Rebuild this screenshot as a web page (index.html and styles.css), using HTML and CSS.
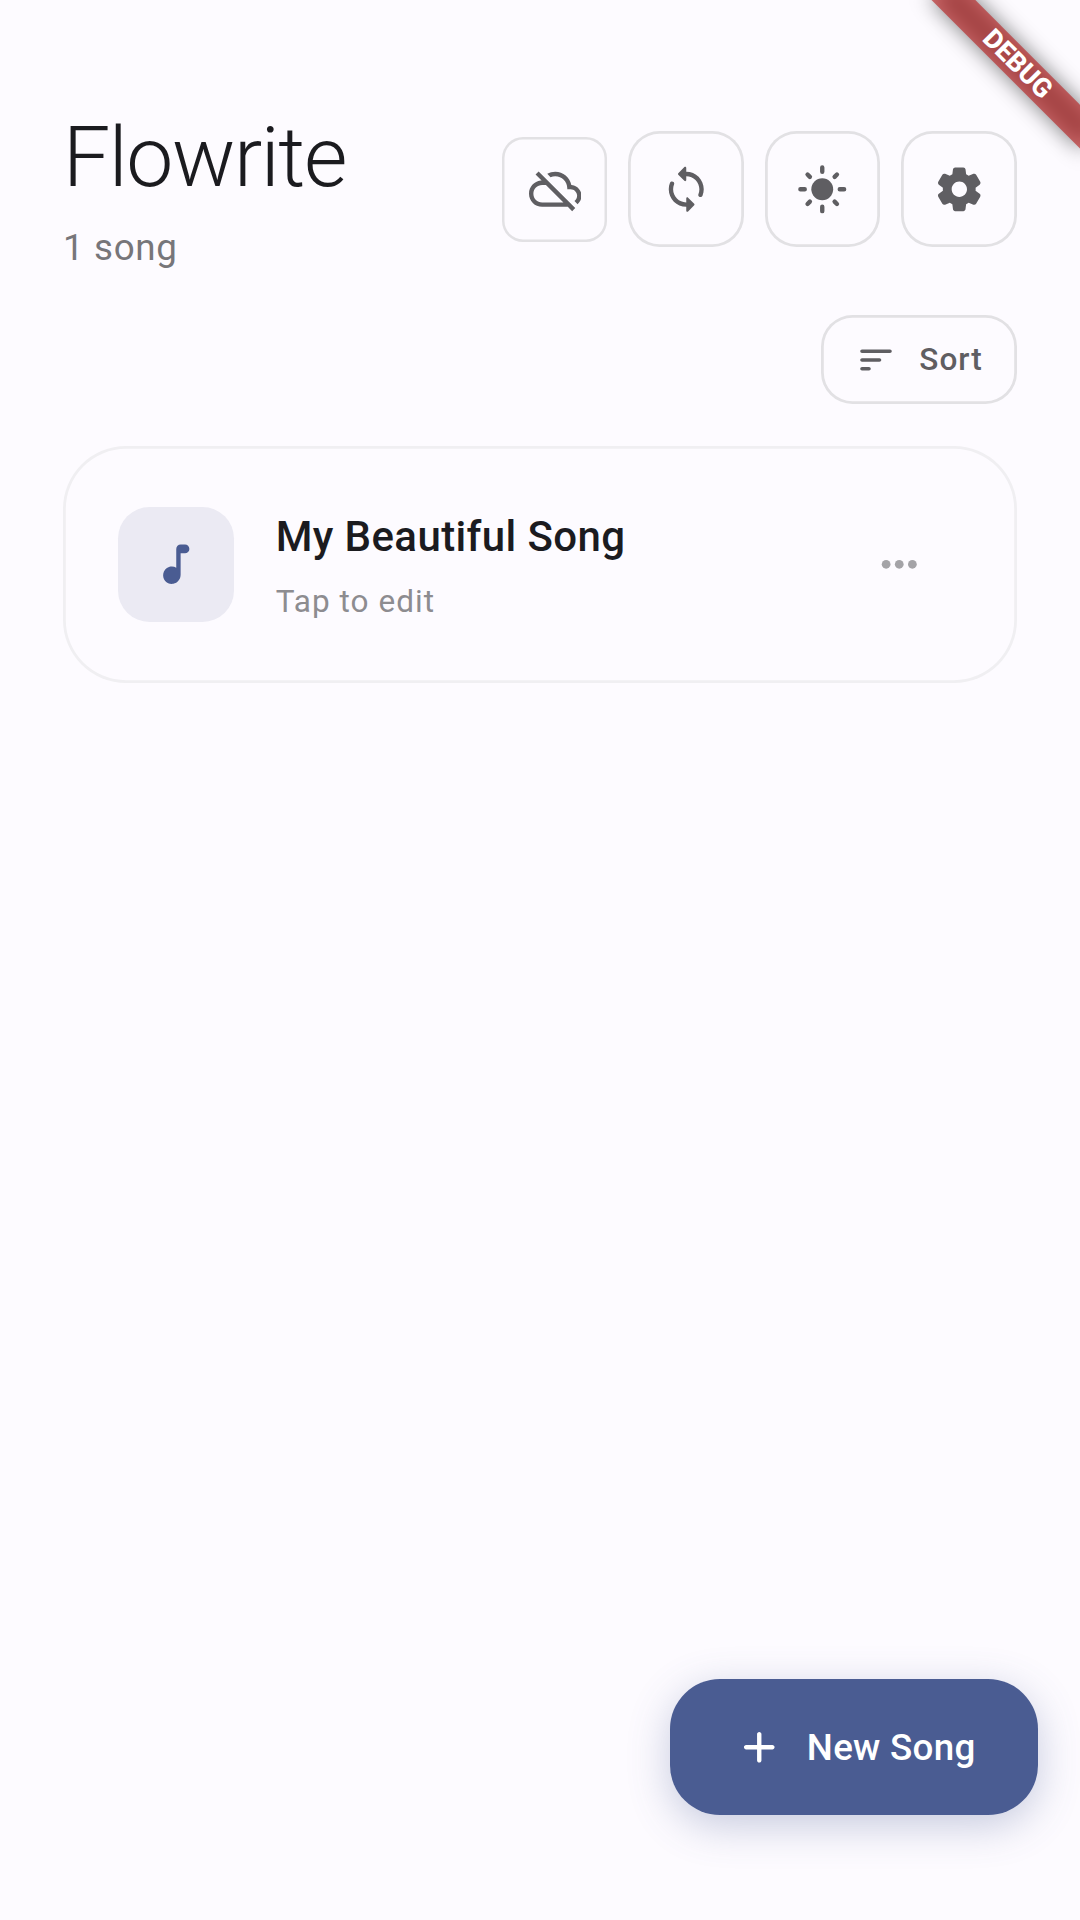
FILE: index.html
```html
<!DOCTYPE html>
<html lang="en">
<head>
<meta charset="utf-8">
<title>Flowrite</title>
<link rel="stylesheet" href="styles.css">
</head>
<body>
<div class="screen">
  <header class="header">
    <div class="heading">
      <h1 class="title">Flowrite</h1>
      <p class="count">1 song</p>
    </div>
    <div class="actions">
      <button class="icon-button icon-button-small" aria-label="Offline">
        <svg class="icon" viewBox="0 0 24 24"><path d="M24 15c0-2.64-2.05-4.78-4.65-4.96C18.67 6.59 15.64 4 12 4c-1.33 0-2.57.36-3.65.97l1.49 1.49C10.51 6.17 11.23 6 12 6c3.04 0 5.5 2.46 5.5 5.5v.5H19c1.66 0 3 1.34 3 3 0 .99-.48 1.85-1.21 2.4l1.41 1.41c1.09-.92 1.8-2.27 1.8-3.81zM4.41 3.86L3 5.27l2.77 2.77h-.42C2.34 8.36 0 10.91 0 14c0 3.31 2.69 6 6 6h11.73l2 2 1.41-1.41L4.41 3.86zM6 18c-2.21 0-4-1.79-4-4s1.79-4 4-4h1.73l8 8H6z"/></svg>
      </button>
      <button class="icon-button" aria-label="Sync">
        <svg class="icon" viewBox="0 0 24 24"><path d="M12 4V2.21c0-.45-.54-.67-.85-.35l-2.8 2.79c-.2.2-.2.51 0 .71l2.79 2.79c.32.31.86.09.86-.36V6c3.31 0 6 2.69 6 6 0 .79-.15 1.56-.44 2.25-.15.36-.04.77.23 1.04.51.51 1.37.33 1.64-.34.37-.91.57-1.91.57-2.95 0-4.42-3.58-8-8-8zm0 14c-3.31 0-6-2.69-6-6 0-.79.15-1.56.44-2.25.15-.36.04-.77-.23-1.04-.51-.51-1.37-.33-1.64.34C4.2 9.96 4 10.96 4 12c0 4.42 3.58 8 8 8v1.79c0 .45.54.67.85.35l2.79-2.79c.2-.2.2-.51 0-.71l-2.79-2.79c-.31-.31-.85-.09-.85.36V18z"/></svg>
      </button>
      <button class="icon-button" aria-label="Theme">
        <svg class="icon" viewBox="0 0 24 24"><circle cx="12" cy="12" r="5"/><path class="rays" d="M2 12h2M20 12h2M12 2v2M12 20v2M5.28 5.28l1.07 1.07M17.65 17.65l1.07 1.07M18.72 5.28l-1.07 1.07M6.35 17.65l-1.07 1.07"/></svg>
      </button>
      <button class="icon-button" aria-label="Settings">
        <svg class="icon" viewBox="0 0 24 24"><path d="M19.5 12c0-.23-.01-.45-.03-.68l1.86-1.41c.4-.3.51-.86.26-1.3l-1.87-3.23c-.25-.44-.79-.62-1.25-.42l-2.15.91c-.37-.26-.76-.49-1.17-.68l-.29-2.31c-.06-.5-.49-.88-.99-.88h-3.73c-.51 0-.94.38-1 .88l-.29 2.31c-.41.19-.8.42-1.17.68l-2.15-.91c-.46-.2-1-.02-1.25.42L2.41 8.62c-.25.44-.14.99.26 1.3l1.86 1.41c-.02.22-.03.44-.03.67s.01.45.03.68l-1.86 1.41c-.4.3-.51.86-.26 1.3l1.87 3.23c.25.44.79.62 1.25.42l2.15-.91c.37.26.76.49 1.17.68l.29 2.31c.06.5.49.88.99.88h3.73c.5 0 .93-.38.99-.88l.29-2.31c.41-.19.8-.42 1.17-.68l2.15.91c.46.2 1 .02 1.25-.42l1.87-3.23c.25-.44.14-.99-.26-1.3l-1.86-1.41c.03-.23.04-.45.04-.68zm-7.46 3.5c-1.93 0-3.5-1.57-3.5-3.5s1.57-3.5 3.5-3.5 3.5 1.57 3.5 3.5-1.57 3.5-3.5 3.5z"/></svg>
      </button>
    </div>
  </header>

  <div class="toolbar">
    <button class="sort-button">
      <svg class="icon icon-small" viewBox="0 0 24 24"><path d="M4 18h4c.55 0 1-.45 1-1s-.45-1-1-1H4c-.55 0-1 .45-1 1s.45 1 1 1zM3 7c0 .55.45 1 1 1h16c.55 0 1-.45 1-1s-.45-1-1-1H4c-.55 0-1 .45-1 1zm1 6h10c.55 0 1-.45 1-1s-.45-1-1-1H4c-.55 0-1 .45-1 1s.45 1 1 1z"/></svg>
      <span class="sort-label">Sort</span>
    </button>
  </div>

  <main>
    <article class="song">
      <div class="song-tile">
        <svg class="icon" viewBox="0 0 24 24"><path d="M12 5v8.55c-.94-.54-2.1-.75-3.33-.32-1.34.48-2.37 1.67-2.61 3.07-.46 2.74 1.86 5.08 4.59 4.65 1.96-.31 3.35-2.11 3.35-4.1V7h2c1.1 0 2-.9 2-2s-.9-2-2-2h-2c-1.1 0-2 .9-2 2z"/></svg>
      </div>
      <div class="song-text">
        <h2 class="song-name">My Beautiful Song</h2>
        <p class="song-hint">Tap to edit</p>
      </div>
      <button class="song-menu" aria-label="More">
        <svg class="icon" viewBox="0 0 24 24"><circle cx="6" cy="12" r="2"/><circle cx="12" cy="12" r="2"/><circle cx="18" cy="12" r="2"/></svg>
      </button>
    </article>
  </main>

  <button class="new-song">
    <svg class="icon" viewBox="0 0 24 24"><path d="M18 13h-5v5c0 .55-.45 1-1 1s-1-.45-1-1v-5H6c-.55 0-1-.45-1-1s.45-1 1-1h5V6c0-.55.45-1 1-1s1 .45 1 1v5h5c.55 0 1 .45 1 1s-.45 1-1 1z"/></svg>
    <span class="new-song-label">New Song</span>
  </button>

  <div class="banner"><span class="banner-label">DEBUG</span></div>
</div>
</body>
</html>
```
FILE: styles.css
```css
:root {
  --dp: 2.625px;
  --background: #fdfbff;
  --ink: #1b1b1f;
  --primary: #4a5c92;
  --outline: #e2e1e4;
}

* {
  box-sizing: border-box;
}

body {
  margin: 0;
  background: var(--background);
  color: var(--ink);
  font-family: Roboto, "Liberation Sans", sans-serif;
}

h1, h2, p {
  margin: 0;
}

button {
  border: 0;
  padding: 0;
  background: none;
  color: inherit;
  font: inherit;
}

.screen {
  position: relative;
  display: flex;
  flex-direction: column;
  width: 1080px;
  height: 1920px;
  padding: 108px 63px 105px;
  overflow: hidden;
}

.icon {
  display: block;
  flex: none;
  width: calc(20 * var(--dp));
  height: calc(20 * var(--dp));
  fill: currentColor;
}

.icon-small {
  width: calc(16 * var(--dp));
  height: calc(16 * var(--dp));
}

.rays {
  fill: none;
  stroke: currentColor;
  stroke-width: 2;
  stroke-linecap: round;
}

.header {
  display: flex;
  align-items: center;
  justify-content: space-between;
  height: 162px;
}

.heading {
  display: flex;
  flex-direction: column;
  align-self: flex-start;
  gap: 19px;
  padding-top: 1px;
}

.title {
  font-size: 84px;
  font-weight: 300;
  line-height: 98px;
  letter-spacing: -1.4px;
}

.count {
  color: #77767a;
  font-size: 36.75px;
  line-height: 43px;
  letter-spacing: 0.65px;
}

.actions {
  display: flex;
  align-items: center;
  gap: calc(8 * var(--dp));
  margin-right: 0.25px;
  color: #5f5e62;
}

.icon-button {
  display: grid;
  place-items: center;
  width: calc(44 * var(--dp));
  height: calc(44 * var(--dp));
  border-radius: calc(12 * var(--dp));
  box-shadow: inset 0 0 0 2.8px var(--outline);
}

.icon-button-small {
  width: calc(40 * var(--dp));
  height: calc(40 * var(--dp));
  border-radius: calc(8 * var(--dp));
  box-shadow: inset 0 0 0 2.5px var(--outline);
}

.toolbar {
  display: flex;
  justify-content: flex-end;
  margin-top: 45px;
}

.sort-button {
  display: flex;
  align-items: center;
  gap: 22px;
  height: calc(34 * var(--dp));
  padding: 0 calc(13 * var(--dp));
  border-radius: calc(12 * var(--dp));
  box-shadow: inset 0 0 0 2.8px var(--outline);
  color: #5f5e62;
}

.sort-label {
  font-size: 31.5px;
  font-weight: 500;
  line-height: 37px;
  letter-spacing: 1.05px;
}

.song {
  display: flex;
  align-items: center;
  height: calc(90 * var(--dp));
  margin-top: 42px;
  padding: 0 calc(21 * var(--dp));
  border-radius: calc(24 * var(--dp));
  box-shadow: inset 0 0 0 2.8px #f0eff2;
}

.song-tile {
  display: grid;
  place-items: center;
  width: calc(44 * var(--dp));
  height: calc(44 * var(--dp));
  border-radius: calc(12 * var(--dp));
  background: #ebeaf3;
  color: var(--primary);
}

.song-text {
  display: flex;
  flex: 1;
  flex-direction: column;
  gap: 22px;
  margin-left: calc(16 * var(--dp));
  padding-top: 4px;
}

.song-name {
  font-size: 42px;
  font-weight: 500;
  line-height: 49px;
  letter-spacing: 0.39375px;
}

.song-hint {
  color: #8d8c90;
  font-size: 31.5px;
  line-height: 37px;
  letter-spacing: 1.05px;
}

.song-menu {
  display: grid;
  place-items: center;
  width: calc(48 * var(--dp));
  height: calc(48 * var(--dp));
  color: #a4a3a7;
}

.new-song {
  display: flex;
  align-items: center;
  align-self: flex-end;
  gap: calc(8 * var(--dp));
  height: 136px;
  margin-top: auto;
  margin-right: -21px;
  padding: 0 62.5px 0 63.5px;
  border-radius: 50px;
  background: var(--primary);
  box-shadow: 0 10.5px 42px rgba(74, 92, 146, 0.3);
  color: #fff;
}

.new-song-label {
  font-size: 36.75px;
  font-weight: 500;
  line-height: 43px;
  letter-spacing: 0.2625px;
}

/* Corner ribbon, turned about the top right corner of the screen */
.banner {
  position: absolute;
  top: 0;
  left: 1080px;
  width: 0;
  height: 0;
  transform: rotate(45deg);
}

.banner::before {
  content: "";
  position: absolute;
  top: 73.5px;
  left: -105px;
  width: 210px;
  height: 31.5px;
  background: rgba(0, 0, 0, 0.5);
  filter: blur(10.4px);
}

.banner-label {
  position: absolute;
  top: 73.5px;
  left: -105px;
  width: 210px;
  height: 31.5px;
  padding-left: 2px;
  background: rgba(183, 28, 28, 0.627);
  color: #fff;
  font-size: 26.775px;
  font-weight: 800;
  line-height: 31.5px;
  letter-spacing: -0.1px;
  text-align: center;
}
```
